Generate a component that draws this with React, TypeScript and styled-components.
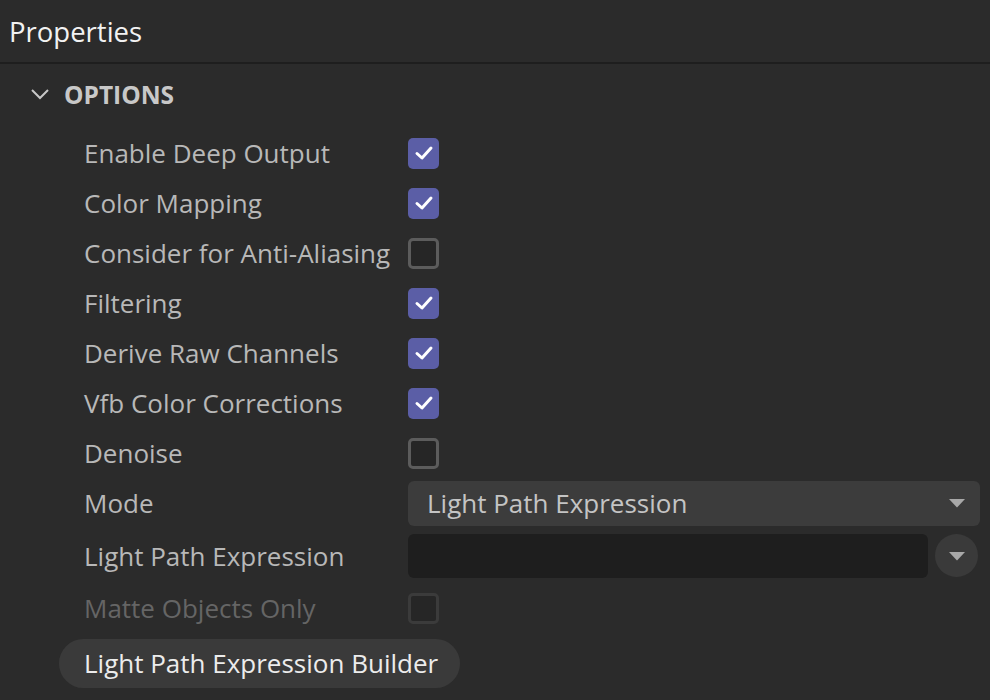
import styled, { createGlobalStyle } from 'styled-components'

const GlobalStyle = createGlobalStyle`
    html, body {
        margin: 0;
        padding: 0;
        background: #2b2b2b;
    }
    body {
        font-family: 'Open Sans', 'Noto Sans', sans-serif;
    }
`

const Panel = styled.div`
    width: 990px;
    height: 700px;
    background: #2b2b2b;
    overflow: hidden;
`

const Header = styled.div`
    height: 62px;
    display: flex;
    align-items: center;
    padding-left: 9px;
    border-bottom: 2px solid #1e1e1e;
    font-size: 27.5px;
    color: #f2f2f2;
`

const Section = styled.div`
    display: flex;
    align-items: center;
    gap: 14px;
    height: 60px;
    padding-left: 30px;
    color: #c8c8c8;
    font-size: 24.5px;
    font-weight: 700;
`

const Rows = styled.div`
    display: flex;
    flex-direction: column;
    padding: 4px 10px 0 84px;
`

const Row = styled.div<{ $h?: number }>`
    display: flex;
    align-items: center;
    height: ${({ $h }) => $h ?? 50}px;
`

const Label = styled.div<{ $dim?: boolean }>`
    width: 324px;
    flex-shrink: 0;
    font-size: 26px;
    color: ${({ $dim }) => ($dim ? '#656565' : '#b8b8b8')};
    white-space: nowrap;
`

const Box = styled.div<{ $checked?: boolean; $dim?: boolean }>`
    width: 31px;
    height: 31px;
    box-sizing: border-box;
    border-radius: 5px;
    display: flex;
    align-items: center;
    justify-content: center;
    background: ${({ $checked }) => ($checked ? '#5b5ea6' : '#262626')};
    border: ${({ $checked, $dim }) =>
        $checked ? 'none' : `3px solid ${$dim ? '#3b3b3b' : '#5c5c5c'}`};
`

const Select = styled.div`
    flex: 1;
    height: 45px;
    border-radius: 6px;
    background: #3c3c3c;
    display: flex;
    align-items: center;
    justify-content: space-between;
    padding: 0 14px 0 19px;
    font-size: 26px;
    color: #c4c4c4;
`

const Field = styled.div`
    flex: 1;
    height: 44px;
    border-radius: 6px;
    background: #1e1e1e;
`

const RoundButton = styled.div`
    width: 43px;
    height: 43px;
    border-radius: 50%;
    background: #3a3a3a;
    margin: 0 2px 0 7px;
    display: flex;
    align-items: center;
    justify-content: center;
`

const PillButton = styled.div`
    margin-left: -25px;
    height: 49px;
    padding: 0 22px 0 25px;
    border-radius: 25px;
    background: #3a3a3a;
    display: flex;
    align-items: center;
    font-size: 26px;
    color: #ececec;
`

const Check = () => (
    <svg width="20" height="16" viewBox="0 0 20 16">
        <path d="M3 8.5 L8 13 L17 3" fill="none" stroke="#fff" strokeWidth="3" strokeLinecap="round" strokeLinejoin="round" />
    </svg>
)

const Triangle = () => (
    <svg width="18" height="10" viewBox="0 0 18 10">
        <path d="M1 1 H17 L9 9.5 Z" fill="#a8a8a8" />
    </svg>
)

const Chevron = () => (
    <svg width="20" height="12" viewBox="0 0 20 12">
        <path d="M2 2 L10 10 L18 2" fill="none" stroke="#c8c8c8" strokeWidth="2" />
    </svg>
)

const checks: [string, boolean][] = [
    ['Enable Deep Output', true],
    ['Color Mapping', true],
    ['Consider for Anti-Aliasing', false],
    ['Filtering', true],
    ['Derive Raw Channels', true],
    ['Vfb Color Corrections', true],
    ['Denoise', false],
]

export default function App() {
    return (
        <Panel>
            <GlobalStyle />
            <Header>Properties</Header>
            <Section>
                <Chevron />
                OPTIONS
            </Section>
            <Rows>
                {checks.map(([label, on]) => (
                    <Row key={label}>
                        <Label>{label}</Label>
                        <Box $checked={on}>{on && <Check />}</Box>
                    </Row>
                ))}
                <Row>
                    <Label>Mode</Label>
                    <Select>
                        Light Path Expression
                        <Triangle />
                    </Select>
                </Row>
                <Row $h={55}>
                    <Label>Light Path Expression</Label>
                    <Field />
                    <RoundButton>
                        <Triangle />
                    </RoundButton>
                </Row>
                <Row>
                    <Label $dim>Matte Objects Only</Label>
                    <Box $dim />
                </Row>
                <Row $h={60}>
                    <PillButton>Light Path Expression Builder</PillButton>
                </Row>
            </Rows>
        </Panel>
    )
}
